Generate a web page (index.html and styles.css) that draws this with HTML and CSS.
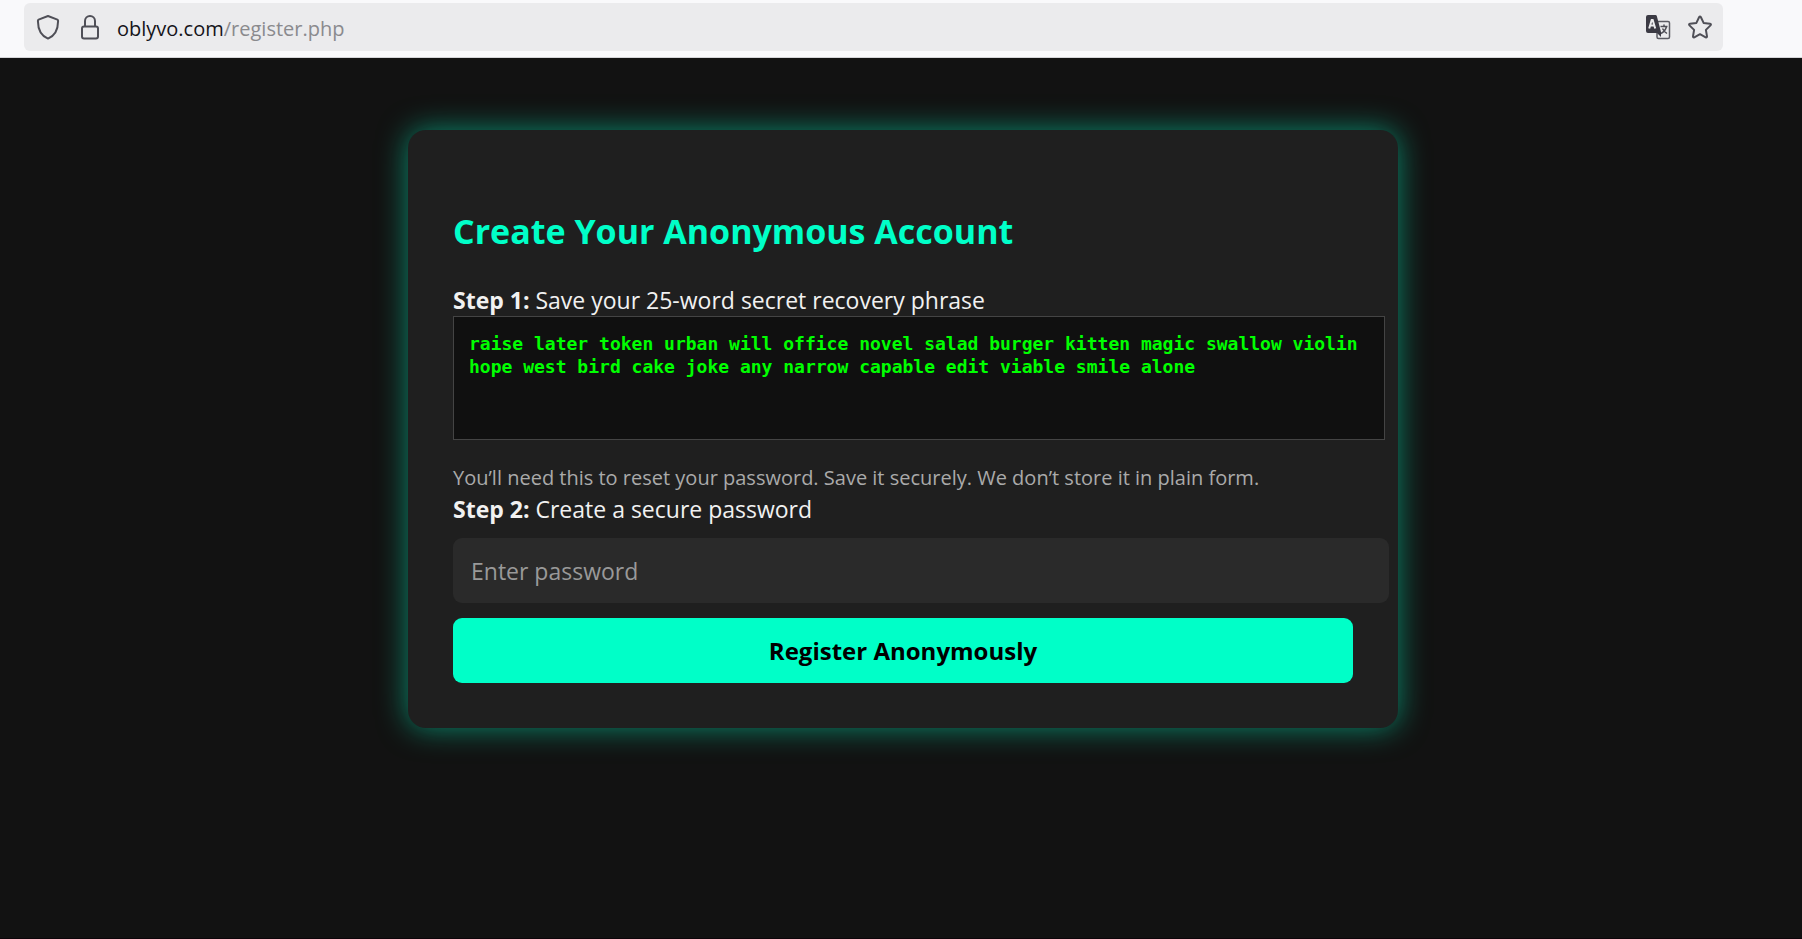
FILE: index.html
```
<!DOCTYPE html>
<html lang="en">
<head>
    <meta charset="UTF-8">
    <meta name="viewport" content="width=device-width, initial-scale=1.0">
    <title>Create Your Anonymous Account</title>
    <link rel="stylesheet" href="styles.css">
</head>
<body>

    <header class="toolbar">
        <div class="url-bar">
            <button type="button" class="icon-button" aria-label="Tracking protection">
                <svg width="27" height="26" viewBox="0 0 27 26" fill="none" stroke="#4f4f57" stroke-width="2" stroke-linejoin="round">
                    <path d="M12 2 L21.4 5.6 Q22.2 6 22.1 7 C22 15.5 18.500 22 12 24.600 C5.500 22 2 15.500 1.900 7 Q1.800 6 2.600 5.600 Z"/>
                </svg>
            </button>
            <button type="button" class="icon-button" aria-label="Connection secure">
                <svg width="24" height="26" viewBox="0 0 24 26" fill="none" stroke="#4f4f57" stroke-width="2">
                    <rect x="4" y="12.500" width="16" height="12" rx="2"/>
                    <path d="M7 12.500 V7 a5 5 0 0 1 10 0 V12.500"/>
                </svg>
            </button>
            <div class="url"><span class="domain">oblyvo.com</span>/register.php</div>
            <button type="button" class="icon-button" aria-label="Translate page">
                <svg width="26" height="26" viewBox="0 0 26 26" fill="none">
                    <rect x="11" y="7.500" width="12.500" height="17" rx="1.500" stroke="#5b5b63" stroke-width="1.500"/>
                    <path d="M0 3 Q0 1 2 1 H9.500 Q10.500 1 10.800 2 L15 18 V23 L11 19 H2 Q0 19 0 17 Z" fill="#3b3a44"/>
                    <path d="M3.200 14.500 L5.700 6 H6.700 L9.200 14.500 M4.500 11.500 H8" stroke="#ebebed" stroke-width="2"/>
                    <path d="M14.500 12.500 H21.500 M18 10.500 V12.500 M20.500 12.500 Q19.500 17 15 19.500 M16.500 14.500 Q18 17.500 21 19.500" stroke="#4f4f57" stroke-width="1.500"/>
                </svg>
            </button>
            <button type="button" class="icon-button" aria-label="Bookmark this page">
                <svg width="26" height="26" viewBox="0 0 26 26" fill="none" stroke="#4f4f57" stroke-width="2" stroke-linejoin="round">
                    <path d="M12.200 3 Q13 1.800 13.800 3 L16.600 8.900 L23 9.800 Q24.600 10.200 23.500 11.400 L18.900 15.900 L20 22.300 Q20.100 23.800 18.700 23.300 L13 20.200 L7.300 23.300 Q5.900 23.800 6 22.300 L7.100 15.900 L2.500 11.400 Q1.400 10.200 3 9.800 L9.400 8.900 Z"/>
                </svg>
            </button>
        </div>
    </header>

    <div class="page">
        <main class="container">
            <h2>Create Your Anonymous Account</h2>
            <form id="registerForm">
                <label class="step" for="phrase"><strong>Step 1:</strong> Save your 25-word secret recovery phrase</label>
                <textarea id="phrase" class="phrase" readonly spellcheck="false">raise later token urban will office novel salad burger kitten magic swallow violin hope west bird cake joke any narrow capable edit viable smile alone</textarea>
                <p class="note">You’ll need this to reset your password. Save it securely. We don’t store it in plain form.</p>

                <label class="step" for="password"><strong>Step 2:</strong> Create a secure password</label>
                <input type="password" id="password" placeholder="Enter password" required>
                <button type="submit" class="register">Register Anonymously</button>
            </form>
        </main>
    </div>

</body>
</html>
```

FILE: styles.css
```
body {
    box-sizing: border-box;
    margin: 0;
    min-height: 100vh;
    border-bottom: 1px solid #0d050a;
    background-color: #121212;
    color: #f1f1f1;
    font-family: "Segoe UI", "Open Sans", sans-serif;
    font-size: 23px;
}

.toolbar {
    padding: 3px 79px 6px 24px;
    background-color: #f9f9fb;
    border-bottom: 1px solid #d5d5d8;
}

.url-bar {
    display: flex;
    align-items: center;
    gap: 15px;
    height: 48px;
    padding: 0 10px 0 12px;
    border-radius: 6px;
    background-color: #ebebed;
}

.icon-button {
    display: flex;
    padding: 0;
    border: none;
    background: none;
    cursor: pointer;
}

.url {
    flex: 1;
    padding-top: 2px;
    color: #8a8a8e;
    font-size: 20px;
}

.domain {
    color: #15141a;
}

.page {
    padding-left: 4px;
}

.container {
    max-width: 900px;
    margin: 72px auto;
    padding: 45px;
    border-radius: 18px;
    background-color: #1f1f1f;
    box-shadow: 0 0 30px rgba(0, 255, 200, 0.5);
}

h2 {
    margin: 32px 0 29px;
    color: #00ffc8;
    font-size: 34px;
    line-height: 48px;
}

.step {
    display: block;
    line-height: 32px;
}

.phrase {
    display: block;
    width: 100%;
    height: 92px;
    padding: 15px;
    border: 1px solid #444;
    background-color: #101010;
    color: #00ff00;
    font-family: Consolas, "DejaVu Sans Mono", monospace;
    font-size: 18px;
    font-weight: bold;
    line-height: 23px;
    resize: none;
}

.note {
    margin: 23px 0 0;
    color: #aaa;
    font-size: 20px;
    line-height: 30px;
}

#password {
    display: block;
    width: 100%;
    height: 29px;
    margin: 13px 0 15px;
    padding: 18px;
    border: none;
    border-radius: 9px;
    background-color: #2a2a2a;
    color: #fff;
    font-family: inherit;
    font-size: 23px;
}

#password::placeholder {
    color: #999;
}

.register {
    display: block;
    width: 100%;
    height: 65px;
    border: none;
    border-radius: 9px;
    background-color: #00ffc8;
    color: #000;
    font-family: inherit;
    font-size: 24px;
    font-weight: bold;
    cursor: pointer;
}
```
